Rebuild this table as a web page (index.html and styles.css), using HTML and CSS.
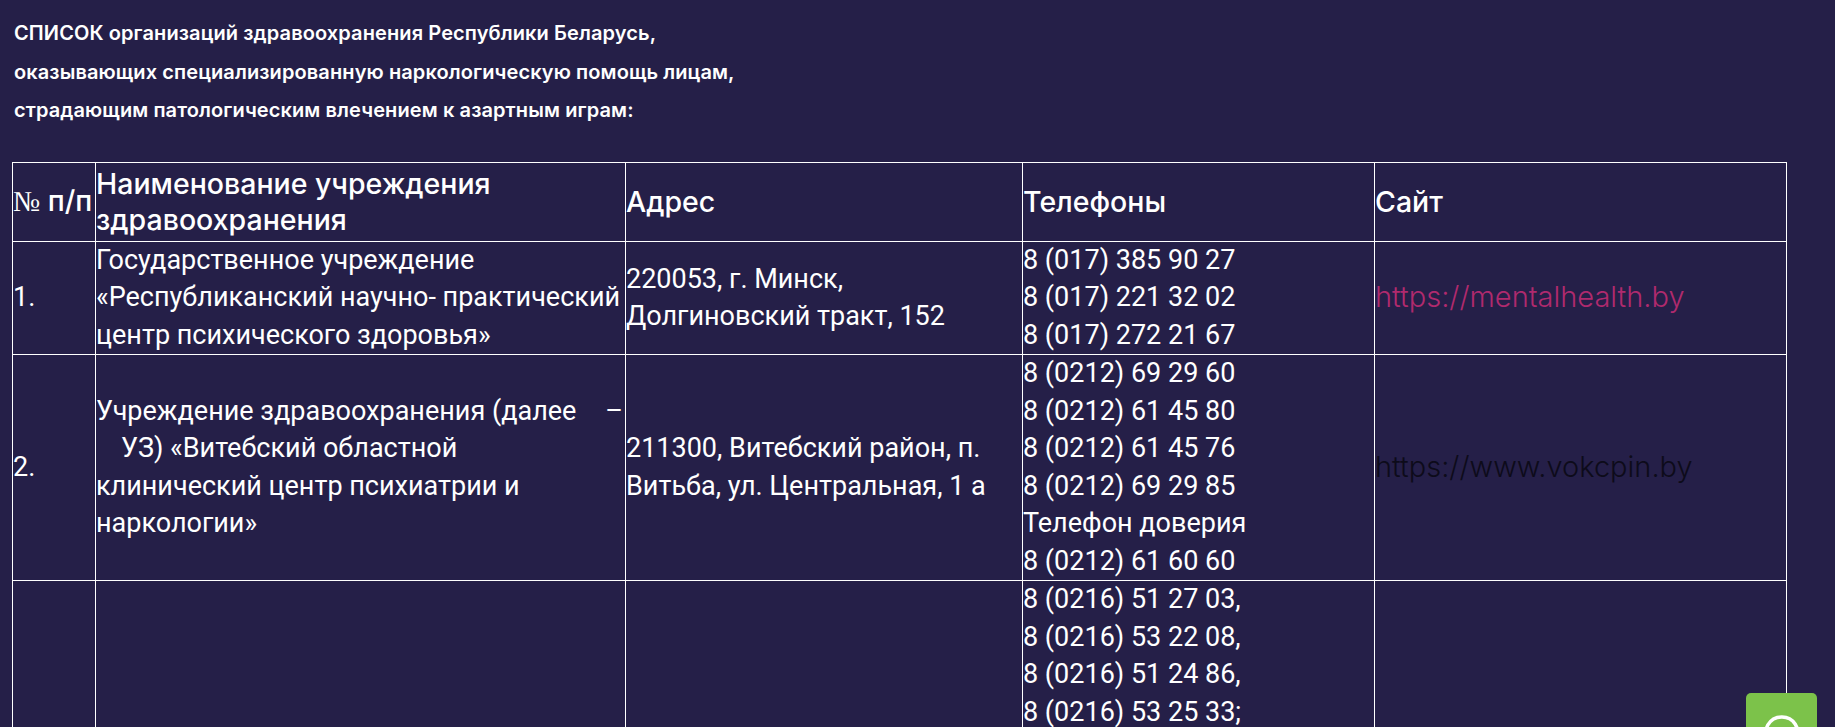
FILE: index.html
```html
<!DOCTYPE html>
<html lang="ru">
<head>
<meta charset="utf-8">
<title>Список организаций здравоохранения</title>
<link rel="stylesheet" href="styles.css">
</head>
<body>
<div class="page">
  <p class="intro">СПИСОК организаций здравоохранения Республики Беларусь,<br>оказывающих специализированную наркологическую помощь лицам,<br>страдающим патологическим влечением к азартным играм:</p>

  <table class="orgs">
    <colgroup>
      <col class="c-num">
      <col class="c-name">
      <col class="c-addr">
      <col class="c-tel">
      <col class="c-site">
    </colgroup>
    <thead>
      <tr>
        <th><span class="numsign">№</span> п/п</th>
        <th>Наименование учреждения<br>здравоохранения</th>
        <th>Адрес</th>
        <th>Телефоны</th>
        <th>Сайт</th>
      </tr>
    </thead>
    <tbody>
      <tr>
        <td>1.</td>
        <td>Государственное учреждение<br>«Республиканский научно- практический<br>центр психического здоровья»</td>
        <td>220053, г. Минск,<br>Долгиновский тракт, 152</td>
        <td>8 (017) 385 90 27<br>8 (017) 221 32 02<br>8 (017) 272 21 67</td>
        <td><a class="site site-pink" href="#">https://mentalhealth.by</a></td>
      </tr>
      <tr>
        <td>2.</td>
        <td><span class="split"><span>Учреждение здравоохранения (далее</span><span>–</span></span><span class="indent">УЗ) «Витебский областной</span>клинический центр психиатрии и<br>наркологии»</td>
        <td>211300, Витебский район, п.<br>Витьба, ул. Центральная, 1 а</td>
        <td>8 (0212) 69 29 60<br>8 (0212) 61 45 80<br>8 (0212) 61 45 76<br>8 (0212) 69 29 85<br>Телефон доверия<br>8 (0212) 61 60 60</td>
        <td><span class="site site-dark">https://www.vokcpin.by</span></td>
      </tr>
      <tr>
        <td>3.</td>
        <td>Учреждение здравоохранения<br>«Оршанская центральная<br>поликлиника»</td>
        <td>211391, г. Орша,<br>ул. Мира, 46</td>
        <td>8 (0216) 51 27 03,<br>8 (0216) 53 22 08,<br>8 (0216) 51 24 86,<br>8 (0216) 53 25 33;<br>8 (0216) 51 27 10,<br>8 (0216) 53 22 11,<br>8 (0216) 51 24 80,<br>8 (0216) 53 25 30;<br>Телефон доверия<br>8 (0216) 51 27 00<br>8 (0216) 53 22 00</td>
        <td></td>
      </tr>
    </tbody>
  </table>
</div>

<a class="chat-btn" href="#" aria-label="Чат">
  <svg class="chat-icon" viewBox="0 0 40 40" width="40" height="40" aria-hidden="true">
    <path d="M20 4 A16 16 0 1 1 8.5 31.2 L5 35 L6.2 28.6 A16 16 0 0 1 20 4 Z" fill="none" stroke="#fff" stroke-width="3.5" stroke-linejoin="round"/>
    <circle cx="13.5" cy="20" r="2.3" fill="#fff"/>
    <circle cx="20" cy="20" r="2.3" fill="#fff"/>
    <circle cx="26.5" cy="20" r="2.3" fill="#fff"/>
  </svg>
</a>
</body>
</html>
```

FILE: styles.css
```css
html, body {
  margin: 0;
  padding: 0;
  background: #251f48;
}

body {
  color: #ffffff;
  font-family: Roboto, "Liberation Sans", sans-serif;
}

.page {
  padding: 14px 12px 40px 12px;
}

.intro {
  margin: 0 0 32px 2px;
  font-family: Inter, "Noto Sans", sans-serif;
  font-weight: 600;
  font-size: 20px;
  line-height: 38.6px;
  letter-spacing: 0.1px;
  color: #ffffff;
}

.orgs {
  border-collapse: collapse;
  table-layout: fixed;
  width: 1774px;
}

.c-num { width: 83px; }
.c-name { width: 530px; }
.c-addr { width: 397px; }
.c-tel { width: 352px; }
.c-site { width: 412px; }

.orgs th,
.orgs td {
  border: 1px solid #ffffff;
  vertical-align: middle;
  text-align: left;
  padding: 0;
  white-space: nowrap;
}

.orgs th {
  font-family: Inter, "Noto Sans", sans-serif;
  font-weight: 500;
  font-size: 28.5px;
  line-height: 36px;
  letter-spacing: 0;
  padding-top: 3px;
  padding-bottom: 3px;
}

.numsign {
  font-family: "Liberation Serif", "DejaVu Serif", serif;
  font-weight: 400;
}

.orgs td {
  font-size: 27px;
  line-height: 37.5px;
  font-weight: 400;
}

.split {
  display: flex;
  justify-content: space-between;
  padding-right: 2px;
}

.indent {
  display: block;
  padding-left: 25px;
}

.site {
  font-family: Inter, "Noto Sans", sans-serif;
  font-weight: 300;
  font-size: 29px;
  letter-spacing: 0;
  text-decoration: none;
}

.site-pink {
  color: #b02a6e;
}

.site-dark {
  color: #0d0b1a;
}

.chat-btn {
  position: fixed;
  right: 18px;
  bottom: -37px;
  width: 71px;
  height: 71px;
  border-radius: 5px;
  background: #7cc24a;
  display: flex;
  justify-content: center;
  align-items: flex-start;
  padding-top: 20px;
  box-sizing: border-box;
}

.chat-icon {
  display: block;
}
```
